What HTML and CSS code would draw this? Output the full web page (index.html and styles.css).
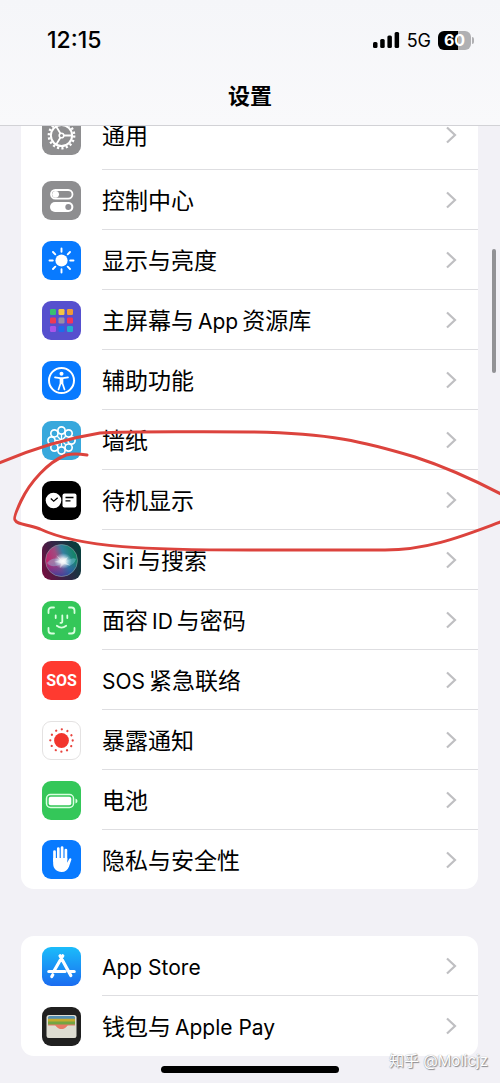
FILE: index.html
```html
<!DOCTYPE html>
<html lang="zh-CN">
<head>
<meta charset="utf-8">
<meta name="viewport" content="width=device-width, initial-scale=1">
<title>设置</title>
<link rel="stylesheet" href="styles.css">
</head>
<body>
<svg class="defs" aria-hidden="true">
  <symbol id="chevron" viewBox="0 0 12 18"><path d="M2 1.500 10 9 2 16.500" fill="none" stroke="#bfbfc2" stroke-width="2.200"/></symbol>
</svg>
<div class="screen">
  <header class="top">
    <div class="status">
      <time class="clock">12:15</time>
      <div class="indicators">
        <svg class="signal" viewBox="0 0 27 18"><rect y="11" width="4.500" height="6" rx="1.500"/><rect x="7.200" y="8" width="4.500" height="9" rx="1.500"/><rect x="14.400" y="4.500" width="4.500" height="12.500" rx="1.500"/><rect x="21.600" y="1" width="4.500" height="16" rx="1.500"/></svg>
        <span class="network">5G</span>
        <div class="battery"><span class="level">60</span></div>
      </div>
    </div>
    <h1 class="title">设置</h1>
  </header>

  <main class="content">
    <nav class="card first">
      <a class="row under" href="#">
        <svg class="icon gray" viewBox="0 0 39 39"><g fill="none" stroke="#fff"><circle cx="19.500" cy="19.500" r="12.700" stroke-width="2.400" stroke-dasharray="2.200 2.233"/><circle cx="19.500" cy="19.500" r="10.600" stroke-width="2"/><circle cx="19.500" cy="19.500" r="2.300" stroke-width="1.600"/><path d="M22 19.500h8M18.300 17.300l-4.400-7.300M18.300 21.700l-4.400 7.300" stroke-width="1.800"/></g></svg>
        <span class="label">通用</span><svg class="chevron"><use href="#chevron"/></svg>
      </a>
      <a class="row" href="#">
        <svg class="icon gray" viewBox="0 0 39 39"><rect x="9" y="9" width="21.500" height="8.600" rx="4.300" fill="none" stroke="#fff" stroke-width="1.800"/><circle cx="13.600" cy="13.300" r="3.400" fill="#fff"/><rect x="8" y="21" width="23.400" height="10" rx="5" fill="#fff"/><circle cx="26.300" cy="26" r="3" fill="#8e8e93"/></svg>
        <span class="label">控制中心</span><svg class="chevron"><use href="#chevron"/></svg>
      </a>
      <a class="row" href="#">
        <svg class="icon blue" viewBox="0 0 39 39"><circle cx="19.500" cy="19.500" r="6.100" fill="#fff"/><path d="M19.500 7.500v3.300M19.500 28.200v3.300M7.500 19.500h3.300M28.200 19.500h3.300M11 11l2.300 2.300M25.700 25.700 28 28M11 28l2.300-2.300M25.700 13.300 28 11" stroke="#fff" stroke-width="1.900" stroke-linecap="round"/></svg>
        <span class="label">显示与亮度</span><svg class="chevron"><use href="#chevron"/></svg>
      </a>
      <a class="row" href="#">
        <svg class="icon indigo" viewBox="0 0 39 39"><rect x="8" y="8" width="6" height="6" rx="1.200" fill="#38c172"/><rect x="16.500" y="8" width="6" height="6" rx="1.200" fill="#f5c542"/><rect x="25" y="8" width="6" height="6" rx="1.200" fill="#f09a37"/><rect x="8" y="16.500" width="6" height="6" rx="1.200" fill="#ee3b55"/><rect x="16.500" y="16.500" width="6" height="6" rx="1.200" fill="#9a8fa5"/><rect x="25" y="16.500" width="6" height="6" rx="1.200" fill="#f2355b"/><rect x="8" y="25" width="6" height="6" rx="1.200" fill="#a855e8"/><rect x="16.500" y="25" width="6" height="6" rx="1.200" fill="#1f6bea"/><rect x="25" y="25" width="6" height="6" rx="1.200" fill="#21b0cf"/></svg>
        <span class="label">主屏幕与<span class="latin">App</span>资源库</span><svg class="chevron"><use href="#chevron"/></svg>
      </a>
      <a class="row" href="#">
        <svg class="icon blue" viewBox="0 0 39 39"><circle cx="19.500" cy="19.500" r="12.500" fill="none" stroke="#fff" stroke-width="2"/><circle cx="19.500" cy="12.700" r="2" fill="#fff"/><path d="M13 16.400 18 17.200h3l5-.8M18.500 17.500v5l-2 6M20.500 17.500v5l2 6M19.500 17v5.500" fill="none" stroke="#fff" stroke-width="1.700" stroke-linecap="round" stroke-linejoin="round"/></svg>
        <span class="label">辅助功能</span><svg class="chevron"><use href="#chevron"/></svg>
      </a>
      <a class="row" href="#">
        <svg class="icon cyan" viewBox="0 0 39 39"><g fill="none" stroke="#fff" stroke-width="1.700"><circle cx="19.500" cy="9.500" r="3.600"/><circle cx="26.600" cy="12.400" r="3.600"/><circle cx="29.500" cy="19.500" r="3.600"/><circle cx="26.600" cy="26.600" r="3.600"/><circle cx="19.500" cy="29.500" r="3.600"/><circle cx="12.400" cy="26.600" r="3.600"/><circle cx="9.500" cy="19.500" r="3.600"/><circle cx="12.400" cy="12.400" r="3.600"/><path d="M19.500 13.500v12M13.500 19.500h12M15.300 15.300l8.400 8.400M15.300 23.700l8.400-8.400" stroke-width="1.300"/></g><circle cx="19.500" cy="19.500" r="2" fill="#fff"/></svg>
        <span class="label">墙纸</span><svg class="chevron"><use href="#chevron"/></svg>
      </a>
      <a class="row" href="#">
        <svg class="icon black" viewBox="0 0 39 39"><circle cx="11.500" cy="19.500" r="7.800" fill="#fff"/><path d="m8.800 17.600 2.900 2.600 4-3.400" fill="none" stroke="#000" stroke-width="1.300"/><rect x="20.500" y="12.600" width="14" height="13.800" rx="2" fill="#fff"/><path d="M23.500 16.500h8M23.500 19.800h5" stroke="#000" stroke-width="1.300"/></svg>
        <span class="label">待机显示</span><svg class="chevron"><use href="#chevron"/></svg>
      </a>
      <a class="row" href="#">
        <svg class="icon" viewBox="0 0 39 39"><defs><linearGradient id="siriBack" x1="0" y1=".7" x2="1" y2=".3"><stop stop-color="#70103f"/><stop offset=".45" stop-color="#352547"/><stop offset="1" stop-color="#073f3c"/></linearGradient><linearGradient id="siriOrb" x1=".05" y1=".7" x2=".95" y2=".4"><stop stop-color="#c51f68"/><stop offset=".4" stop-color="#a04a80"/><stop offset=".65" stop-color="#33809f"/><stop offset="1" stop-color="#138467"/></linearGradient><radialGradient id="siriGlow"><stop stop-color="#fff"/><stop offset=".35" stop-color="#fff" stop-opacity=".8"/><stop offset="1" stop-color="#bce6ff" stop-opacity="0"/></radialGradient><linearGradient id="siriLow" x1="0" y1="0" x2="0" y2="1"><stop offset=".55" stop-color="#3549b0" stop-opacity="0"/><stop offset="1" stop-color="#2440a0" stop-opacity=".8"/></linearGradient></defs><rect width="39" height="39" fill="url(#siriBack)"/><circle cx="19.500" cy="19.500" r="16" fill="url(#siriOrb)"/><circle cx="19.500" cy="19.500" r="16" fill="url(#siriLow)" stroke="#8ca7a9" stroke-opacity=".7" stroke-width=".8"/><path d="M5 22c7-8 12-3 16-2s9-5 13-2c-2 7-8 8-13 3-5 5-12 6-16 1Z" fill="#8ed5ee" opacity=".4"/><ellipse cx="21" cy="20" rx="9" ry="8" fill="url(#siriGlow)"/><path d="m14 14 6 5 6-3-3 5 6 4-7-2-4 4 1-5-7-1 6-2Z" fill="#fff" opacity=".45"/></svg>
        <span class="label"><span class="latin lead">Siri</span>与搜索</span><svg class="chevron"><use href="#chevron"/></svg>
      </a>
      <a class="row" href="#">
        <svg class="icon green" viewBox="0 0 39 39"><g fill="none" stroke="#d9ffe0" stroke-width="1.800" stroke-linecap="round"><path d="M6.500 12V9.500a3 3 0 0 1 3-3H12M27 6.500h2.500a3 3 0 0 1 3 3V12M32.500 27v2.500a3 3 0 0 1-3 3H27M12 32.500H9.500a3 3 0 0 1-3-3V27"/><path d="M13.700 14.500v2.500M25.300 14.500v2.500M20.300 14.500v6q0 1.400-1.800 1.400M14.800 24.800q4.700 3.600 9.400 0"/></g></svg>
        <span class="label">面容<span class="latin">ID</span>与密码</span><svg class="chevron"><use href="#chevron"/></svg>
      </a>
      <a class="row" href="#">
        <span class="icon red">SOS</span>
        <span class="label"><span class="latin lead">SOS</span>紧急联络</span><svg class="chevron"><use href="#chevron"/></svg>
      </a>
      <a class="row" href="#">
        <svg class="icon outlined" viewBox="0 0 39 39"><circle cx="19.500" cy="19.500" r="7.800" fill="#f2352d"/><circle cx="19.500" cy="19.500" r="11.800" fill="none" stroke="#e8453f" stroke-width="2.400" stroke-linecap="round" stroke-dasharray="0.010 6.168"/></svg>
        <span class="label">暴露通知</span><svg class="chevron"><use href="#chevron"/></svg>
      </a>
      <a class="row" href="#">
        <svg class="icon green" viewBox="0 0 39 39"><rect x="4.500" y="13.500" width="27" height="13" rx="4" fill="none" stroke="#d9ffe0" stroke-width="1.500"/><rect x="6.700" y="15.700" width="22.600" height="8.600" rx="2" fill="#fff"/><path d="M33.500 17.500q2 .6 2 2.500t-2 2.500Z" fill="#d9ffe0"/></svg>
        <span class="label">电池</span><svg class="chevron"><use href="#chevron"/></svg>
      </a>
      <a class="row" href="#">
        <svg class="icon blue" viewBox="0 0 39 39"><path d="M12.500 21V11.500M16.300 19V8.500M20.100 19V7.500M23.900 20V10" stroke="#fff" stroke-width="2.700" stroke-linecap="round"/><path d="M11.150 18h14.100v4.700l2-3.900c.7-1.200 2.600-.7 2.100 1l-2.300 6.700c-1.200 3.500-3.800 5.500-7.400 5.500-5.300 0-8.500-3.600-8.500-8.500Z" fill="#fff"/></svg>
        <span class="label">隐私与安全性</span><svg class="chevron"><use href="#chevron"/></svg>
      </a>
    </nav>

    <nav class="card">
      <a class="row" href="#">
        <svg class="icon store" viewBox="0 0 39 39"><path d="M20.800 8.800 12 24M18 8.800l10.800 19.700M6.800 24.500H23M28 24.500h4.200M10.800 27.800l-1 1.700" fill="none" stroke="#fff" stroke-width="3.200" stroke-linecap="round"/></svg>
        <span class="label"><span class="latin lead">App Store</span></span><svg class="chevron"><use href="#chevron"/></svg>
      </a>
      <a class="row" href="#">
        <svg class="icon dark" viewBox="0 0 39 39"><rect x="4.500" y="8" width="30" height="23" rx="2.500" fill="#deddd2"/><path d="M6 10.500q0-1.500 1.500-1.500h24q1.500 0 1.500 1.500V12H6Z" fill="#5590b2"/><path d="M6 11.700h27V15H6Z" fill="#c6ab2d"/><path d="M6 14.500h27V18H6Z" fill="#73a544"/><path d="M6 17.500h27V20H6Z" fill="#e97966"/><path d="M5 18.500h8c2 0 2.500 4 6.500 4s4.500-4 6.500-4h8V29q0 1.500-1.500 1.500h-26Q5 30.500 5 29Z" fill="#deddd2"/><path d="M13.500 18h12c-1.200 2-2.500 4-6 4s-4.800-2-6-4Z" fill="#e97966"/></svg>
        <span class="label">钱包与<span class="latin">Apple Pay</span></span><svg class="chevron"><use href="#chevron"/></svg>
      </a>
    </nav>
    <div class="home"></div>
  </main>

  <svg class="scribble" viewBox="0 0 500 140" aria-hidden="true"><path d="M-3 44Q50 21 100 13C130 11 190 12 250 12C330 13 365 22 415 37Q455 50 503 75"/><path d="M87 35Q74 33 66 35C48 42 30 62 21 81Q13 98 15 100C17 105 28 104 40 109C80 128 150 130 250 130H385C430 130 465 115 503 101"/></svg>
  <div class="scrollbar" aria-hidden="true"></div>
  <div class="watermark">知乎 @Molicjz</div>
</div>
</body>
</html>
```
FILE: styles.css
```css
* { box-sizing: border-box; }

body {
  margin: 0;
  background: #f2f1f6;
  color: #000;
  font-family: Inter, "Noto Sans CJK SC", sans-serif;
}

.defs { position: absolute; width: 0; height: 0; }

.screen { position: relative; overflow: hidden; }

.top {
  position: relative;
  z-index: 1;
  padding-top: 24px;
  background: linear-gradient(#f5f6f9, #f9f9fb);
  border-bottom: 1px solid #d2d2d6;
}

.status {
  display: flex;
  align-items: center;
  justify-content: space-between;
  height: 32px;
  padding: 0 25px 0 47px;
}

.clock { font-size: 23px; font-weight: 500; }

.indicators { display: flex; align-items: center; gap: 7px; }

.signal { width: 27px; height: 18px; }

.network { font-size: 18px; }

.battery {
  position: relative;
  width: 33px;
  height: 19px;
  margin-right: 4px;
  border-radius: 6px;
  background: linear-gradient(90deg, #000 60%, #b0b0b3 60%);
}

.battery::after {
  content: "";
  position: absolute;
  top: 6px;
  right: -3px;
  width: 2px;
  height: 7px;
  border-radius: 0 2px 2px 0;
  background: #b0b0b3;
}

.level {
  display: block;
  color: #fff;
  font-size: 16px;
  font-weight: 700;
  line-height: 19px;
  text-align: center;
}

.title {
  margin: 0;
  padding: 24px 0 13px;
  font-size: 22px;
  font-weight: 600;
  line-height: 32px;
  text-align: center;
}

.content { padding: 0 22px 10px 21px; }

.card {
  overflow: hidden;
  border-radius: 13px;
  background: #fff;
}

.first { margin-top: -26px; margin-bottom: 47px; }

.row {
  position: relative;
  display: flex;
  align-items: center;
  gap: 21px;
  height: 60px;
  padding: 0 21px;
  color: inherit;
  text-decoration: none;
}

.under { height: 70px; }

.first .row:last-child { height: 59px; }

.row:not(:last-child)::after {
  content: "";
  position: absolute;
  right: 0;
  bottom: 0;
  left: 81px;
  height: 1px;
  background: #dedee1;
}

.icon {
  flex: none;
  width: 39px;
  height: 39px;
  border-radius: 9px;
}

.gray { background: #8e8e90; }
.blue { background: #087aff; }
.indigo { background: #5650ce; }
.cyan { background: #38a8dc; }
.black { background: #000; }
.green { background: #34c759; }
.outlined { background: #fff; border: 1px solid #e4e2e2; }
.store { background: linear-gradient(#1bbcfa, #1b6cf0); }
.dark { background: #202020; }

.red {
  background: #ff3a30;
  color: #fff;
  font-family: Roboto, sans-serif;
  font-size: 16px;
  font-weight: 700;
  line-height: 39px;
  text-align: center;
}

.label {
  flex: 1;
  padding-top: 2px;
  font-size: 23px;
  line-height: 32px;
  white-space: nowrap;
}

.latin { margin: 0 4px; font-size: 21px; }
.lead { margin-left: 0; }

.chevron { flex: none; width: 12px; height: 18px; }

.home {
  width: 178px;
  height: 7px;
  margin: 10px auto 0;
  border-radius: 4px;
  background: #000;
}

.scribble {
  position: absolute;
  z-index: 2;
  top: 420px;
  left: 0;
  width: 100%;
  height: 140px;
  fill: none;
  stroke: #dc433d;
  stroke-width: 3;
  stroke-linecap: round;
  stroke-linejoin: round;
  pointer-events: none;
}

.scrollbar {
  position: absolute;
  top: 249px;
  right: 4px;
  width: 4px;
  height: 124px;
  border-radius: 2px;
  background: #929295;
}

.watermark {
  position: absolute;
  right: 12px;
  bottom: 10px;
  color: #fff;
  font-size: 15px;
  line-height: 24px;
  text-shadow: 1px 1px 1px #88888c, 0 0 1px #88888c;
}
```
